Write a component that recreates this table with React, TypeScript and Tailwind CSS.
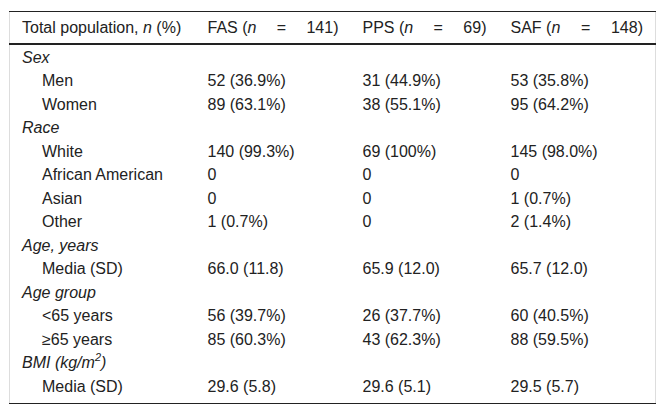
type Row = { label: string; group?: boolean; sup?: boolean; vals?: [string, string, string] };

const rows: Row[] = [
  { label: "Sex", group: true },
  { label: "Men", vals: ["52 (36.9%)", "31 (44.9%)", "53 (35.8%)"] },
  { label: "Women", vals: ["89 (63.1%)", "38 (55.1%)", "95 (64.2%)"] },
  { label: "Race", group: true },
  { label: "White", vals: ["140 (99.3%)", "69 (100%)", "145 (98.0%)"] },
  { label: "African American", vals: ["0", "0", "0"] },
  { label: "Asian", vals: ["0", "0", "1 (0.7%)"] },
  { label: "Other", vals: ["1 (0.7%)", "0", "2 (1.4%)"] },
  { label: "Age, years", group: true },
  { label: "Media (SD)", vals: ["66.0 (11.8)", "65.9 (12.0)", "65.7 (12.0)"] },
  { label: "Age group", group: true },
  { label: "<65 years", vals: ["56 (39.7%)", "26 (37.7%)", "60 (40.5%)"] },
  { label: "≥65 years", vals: ["85 (60.3%)", "43 (62.3%)", "88 (59.5%)"] },
  { label: "BMI", group: true, sup: true },
  { label: "Media (SD)", vals: ["29.6 (5.8)", "29.6 (5.1)", "29.5 (5.7)"] },
];

function HeadCell({ name, n }: { name: string; n: string }) {
  return (
    <th className="px-3 text-left font-normal">
      <div className="flex justify-between">
        <span>
          {name} (<i>n</i>
        </span>
        <span>=</span>
        <span>{n})</span>
      </div>
    </th>
  );
}

// first row sits a bit lower, last row leaves room above the closing rule
function rowClass(i: number) {
  if (i === 0) return "h-[25.5px] [&>td]:pt-[2px]";
  if (i === rows.length - 1) return "h-[29px] [&>td]:pb-[5.5px]";
  return "h-[23.5px]";
}

export default function App() {
  return (
    <div className="w-[665px] h-[415px] bg-white pt-[11px] px-[9px] text-[16px] leading-[19px] text-[#222] font-['Liberation_Sans',Arial,sans-serif]">
      <table className="w-full border-collapse border-x border-[#ddd]">
        <colgroup>
          <col className="w-[186px]" />
          <col className="w-[155px]" />
          <col className="w-[148px]" />
          <col />
        </colgroup>
        <thead>
          <tr className="h-[32px] border-t border-b-2 border-[#222]">
            <th className="px-3 text-left font-normal">
              Total population, <i>n</i> (%)
            </th>
            <HeadCell name="FAS" n="141" />
            <HeadCell name="PPS" n="69" />
            <HeadCell name="SAF" n="148" />
          </tr>
        </thead>
        <tbody className="border-b border-[#222]">
          {rows.map((r, i) => (
            <tr key={i} className={rowClass(i)}>
              {r.group ? (
                <td colSpan={4} className="px-3 italic">
                  {r.sup ? (
                    <>
                      BMI (kg/m<sup className="text-[11px] -top-[7px]">2</sup>)
                    </>
                  ) : (
                    r.label
                  )}
                </td>
              ) : (
                <>
                  <td className="pl-8 pr-3">{r.label}</td>
                  {r.vals!.map((v, j) => (
                    <td key={j} className="px-3">
                      {v}
                    </td>
                  ))}
                </>
              )}
            </tr>
          ))}
        </tbody>
      </table>
    </div>
  );
}
